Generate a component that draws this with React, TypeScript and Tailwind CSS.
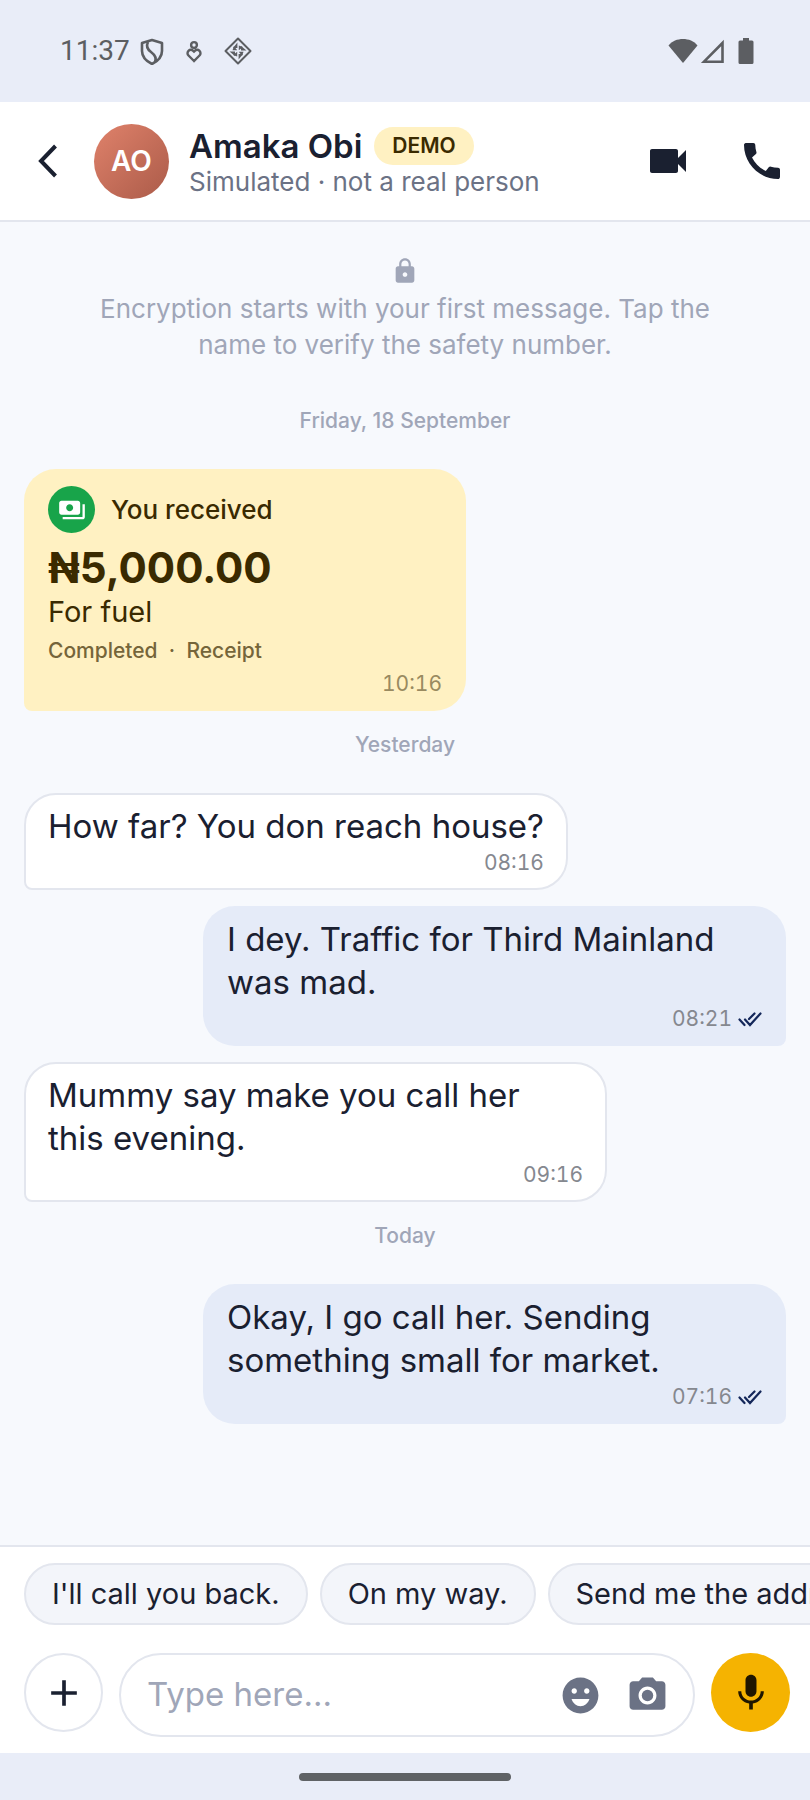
import type { ReactNode } from 'react';
import {
  MdAdd,
  MdCameraAlt,
  MdCall,
  MdEmojiEmotions,
  MdLock,
  MdMic,
  MdPayments,
  MdVideocam
} from 'react-icons/md';

interface Message {
  id: number;
  text: string;
  time: string;
  outgoing?: boolean;
}

const yesterdayMessages: Message[] = [
  { id: 1, text: 'How far? You don reach house?', time: '08:16' },
  { id: 2, text: 'I dey. Traffic for Third Mainland was mad.', time: '08:21', outgoing: true },
  { id: 3, text: 'Mummy say make you call her this evening.', time: '09:16' }
];

const todayMessages: Message[] = [
  { id: 4, text: 'Okay, I go call her. Sending something small for market.', time: '07:16', outgoing: true }
];

const quickReplies = ["I'll call you back.", 'On my way.', 'Send me the address.'];

function StatusBar() {
  return (
    <div className="flex h-[102px] shrink-0 items-center justify-between bg-[#e9edf8] pr-14 pl-15 text-[#5c5e62]">
      <div className="flex items-center">
        <span className="font-[Roboto] text-[28px] leading-8">11:37</span>
        {/* Shield */}
        <svg className="ml-2 size-7" viewBox="0 0 28 28" fill="none" stroke="currentColor" strokeWidth="2.6" strokeLinejoin="round">
          <path d="M14 3 24 6v8c0 6-4 10-10 13C8 24 4 20 4 14V6Z" />
          <path d="M10 5c-2 4-1 7 3 10s6 6 4 10" />
        </svg>
        {/* Person with heart */}
        <svg className="ml-3.5 size-7" viewBox="0 0 28 28" fill="none" stroke="currentColor" strokeWidth="2.4">
          <circle cx="14" cy="8" r="2.900" />
          <path d="m14 24-5.500-5.500a3.300 3.300 0 0 1 0-4.700 3.300 3.300 0 0 1 4.700 0l.8.8.8-.8a3.300 3.300 0 0 1 4.700 0 3.300 3.300 0 0 1 0 4.700Z" />
        </svg>
        {/* Diamond */}
        <svg className="ml-4 size-7" viewBox="0 0 28 28" fill="currentColor">
          <path d="M14 1.500 26.500 14 14 26.500 1.500 14Z" fill="none" stroke="currentColor" strokeWidth="2" strokeLinejoin="round" />
          {[0, 90, 180, 270].map((angle) => (
            <path key={angle} transform={`rotate(${angle} 14 14)`} d="M13.400 5.500V11H9ZM14.800 8.500l4.200 1.500-4.200 3.200Z" />
          ))}
        </svg>
      </div>
      <div className="flex items-center">
        <svg className="h-7 w-[30px]" viewBox="0 0 30 28" fill="currentColor">
          <path d="M15 26 .5 8.500C4 4 9.500 2 15 2s11 2 14.500 6.500Z" />
        </svg>
        <svg className="ml-0.5 h-7 w-[26px]" viewBox="0 0 26 28" fill="none" stroke="currentColor" strokeWidth="2.600">
          <path d="M22.500 6v18.700H4Z" />
        </svg>
        <svg className="ml-3 h-7 w-4" viewBox="0 0 16 28" fill="currentColor">
          <path d="M5 1h6v2.500h3a1.500 1.500 0 0 1 1.500 1.500v20.500A1.500 1.500 0 0 1 14 27H2a1.500 1.500 0 0 1-1.500-1.500V5A1.500 1.500 0 0 1 2 3.500h3Z" />
        </svg>
      </div>
    </div>
  );
}

function ChatHeader() {
  return (
    <header className="flex h-[120px] shrink-0 items-center border-b-2 border-[#e3e6ee] bg-white px-6">
      <button aria-label="Back" className="flex h-14 w-[70px] items-center pl-3">
        <svg className="h-9 w-6" viewBox="0 0 24 36" fill="none" stroke="currentColor" strokeWidth="4">
          <path d="M19.500 3 5 18l14.500 15" />
        </svg>
      </button>
      <div className="flex size-[75px] shrink-0 items-center justify-center rounded-full bg-linear-to-br from-[#e0826b] to-[#ab5b49] text-[28px] font-semibold text-white">
        AO
      </div>
      <div className="ml-5 flex-1 pt-1">
        <div className="flex items-center gap-3">
          <h1 className="text-[33px] leading-[38px] font-semibold">Amaka Obi</h1>
          <span className="rounded-full bg-[#fff1c2] px-[18px] text-[21px] leading-[38px] font-semibold text-[#3a2a00]">
            DEMO
          </span>
        </div>
        <p className="text-[26px] leading-[34px] text-[#6b7285]">Simulated · not a real person</p>
      </div>
      <button aria-label="Video call">
        <MdVideocam className="size-12" />
      </button>
      <button aria-label="Voice call" className="ml-[46px]">
        <MdCall className="size-12" />
      </button>
    </header>
  );
}

function DateLabel({ children }: { children: ReactNode }) {
  return <p className="text-center text-[21px] leading-7 font-medium text-[#a0a6b8]">{children}</p>;
}

function PaymentCard() {
  return (
    <article className="w-[442px] rounded-[32px] rounded-bl-lg bg-[#fff1c2] px-6 pt-[17px] pb-[11px] text-[#3a2a00]">
      <div className="flex items-center gap-4">
        <span className="flex size-[47px] items-center justify-center rounded-full bg-[#18a44a] text-white">
          <MdPayments className="size-7" />
        </span>
        <span className="text-[26px] leading-8 font-medium">You received</span>
      </div>
      <p className="mt-[9px] text-[42px] leading-[52px] font-bold">₦5,000.00</p>
      <p className="text-[29px] leading-9">For fuel</p>
      <p className="mt-1 text-[21px] leading-[34px] font-medium whitespace-pre text-[#75653a]">
        Completed  ·  <a href="#receipt">Receipt</a>
      </p>
      <p className="text-right text-[21px] leading-8 tabular-nums text-[#998a60]">10:16</p>
    </article>
  );
}

function ReadTicks() {
  return (
    <svg
      className="h-[18px] w-6"
      viewBox="0 0 24 18"
      fill="none"
      stroke="#14275a"
      strokeWidth="2.200"
      strokeLinecap="round"
      aria-label="Read"
    >
      <path d="m1.500 9.500 5 5.500M7 9.500l5 5.500L22.500 3.500M11 9l5.500-5.500" />
    </svg>
  );
}

function MessageBubble({ message }: { message: Message }) {
  return (
    <article
      className={`max-w-[583px] rounded-[32px] ${
        message.outgoing
          ? 'self-end rounded-br-lg bg-[#e5ebf8] px-6 py-3'
          : 'self-start rounded-bl-lg border-2 border-[#e3e6ee] bg-white px-[22px] py-2.5'
      }`}
    >
      <p className="text-[33px] leading-[43px]">{message.text}</p>
      <p className="flex items-center justify-end gap-1.5 text-[21px] leading-[30px] tabular-nums text-[#85888f]">
        {message.time}
        {message.outgoing && <ReadTicks />}
      </p>
    </article>
  );
}

function Composer() {
  return (
    <footer className="shrink-0 border-t-2 border-[#e3e6ee] bg-white pt-4 pb-4">
      <div className="flex gap-3 overflow-hidden pl-6">
        {quickReplies.map((reply) => (
          <button
            key={reply}
            className="h-[62px] shrink-0 rounded-full border-2 border-[#e3e6ee] bg-[#f3f5fa] px-[26px] text-[29px] whitespace-nowrap"
          >
            {reply}
          </button>
        ))}
      </div>
      <div className="mt-7 flex items-start gap-4 pr-5 pl-6">
        <button
          aria-label="Add attachment"
          className="flex size-[79px] shrink-0 items-center justify-center rounded-full border-2 border-[#e3e6ee]"
        >
          <MdAdd className="size-11" />
        </button>
        <div className="flex h-[84px] min-w-0 flex-1 items-center rounded-full border-2 border-[#e3e6ee] pr-6 pl-[26px]">
          <input
            type="text"
            aria-label="Message"
            placeholder="Type here…"
            className="min-w-0 flex-1 text-[33px] outline-none placeholder:text-[#a0a6b8]"
          />
          <button aria-label="Emoji" className="shrink-0 text-[#6b7285]">
            <MdEmojiEmotions className="size-[43px]" />
          </button>
          <button aria-label="Camera" className="ml-6 shrink-0 text-[#6b7285]">
            <MdCameraAlt className="size-[43px]" />
          </button>
        </div>
        <button
          aria-label="Record voice note"
          className="flex size-[79px] shrink-0 items-center justify-center rounded-full bg-[#f5b301] text-[#1f1600]"
        >
          <MdMic className="size-11" />
        </button>
      </div>
    </footer>
  );
}

export default function App() {
  return (
    <div className="flex min-h-screen flex-col bg-[#f7f9fd] font-[Inter,sans-serif] text-[#1a2030]">
      <StatusBar />
      <ChatHeader />

      <main className="flex flex-1 flex-col px-6 pt-[35px]">
        <MdLock className="size-7 self-center text-[#a0a6b8]" />
        <p className="mx-auto mt-1.5 max-w-[640px] text-center text-[26px] leading-9 text-[#a0a6b8]">
          Encryption starts with your first message. Tap the name to verify the safety number.
        </p>

        <div className="mt-11 mb-[34px]">
          <DateLabel>Friday, 18 September</DateLabel>
        </div>
        <PaymentCard />

        <div className="mt-5 mb-[34px]">
          <DateLabel>Yesterday</DateLabel>
        </div>
        <div className="flex flex-col gap-4">
          {yesterdayMessages.map((message) => (
            <MessageBubble key={message.id} message={message} />
          ))}
        </div>

        <div className="mt-5 mb-[34px]">
          <DateLabel>Today</DateLabel>
        </div>
        <div className="flex flex-col gap-4">
          {todayMessages.map((message) => (
            <MessageBubble key={message.id} message={message} />
          ))}
        </div>
      </main>

      <Composer />
      <div className="flex h-[47px] shrink-0 items-center justify-center bg-[#e9edf8]">
        <div className="h-2 w-[212px] rounded-full bg-[#5f6265]" />
      </div>
    </div>
  );
}
